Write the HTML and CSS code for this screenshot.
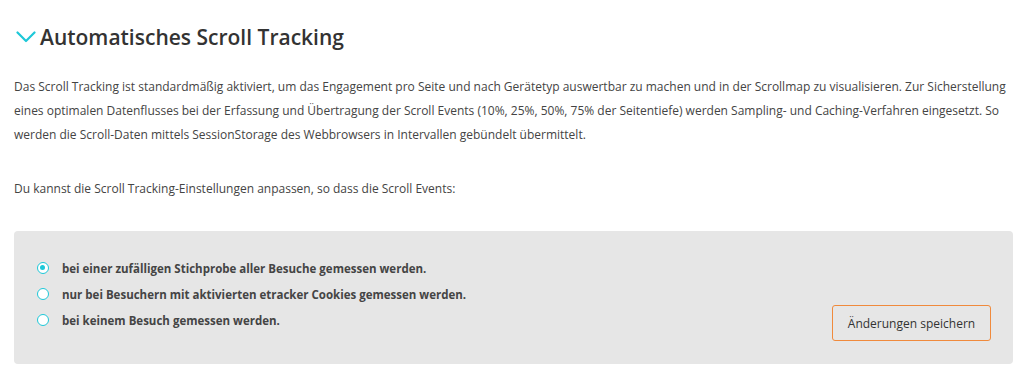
FILE: index.html
```html
<!DOCTYPE html>
<html lang="de">
<head>
<meta charset="utf-8">
<title>Scroll Tracking</title>
<link rel="stylesheet" href="styles.css">
</head>
<body>
<div class="section">
  <h2 class="title">
    <svg class="chevron" width="20" height="12" viewBox="0 0 20 12"><path d="M1.5 1.5 L10 10 L18.5 1.5" fill="none" stroke="#1ec8d8" stroke-width="2.2" stroke-linecap="round" stroke-linejoin="round"/></svg>
    Automatisches Scroll Tracking
  </h2>

  <p class="text">Das Scroll Tracking ist standardmäßig aktiviert, um das Engagement pro Seite und nach Gerätetyp auswertbar zu machen und in der Scrollmap zu visualisieren. Zur Sicherstellung eines optimalen Datenflusses bei der Erfassung und Übertragung der Scroll Events (10%, 25%, 50%, 75% der Seitentiefe) werden Sampling- und Caching-Verfahren eingesetzt. So werden die Scroll-Daten mittels SessionStorage des Webbrowsers in Intervallen gebündelt übermittelt.</p>

  <p class="text">Du kannst die Scroll Tracking-Einstellungen anpassen, so dass die Scroll Events:</p>

  <div class="settings">
    <ul class="options">
      <li class="option checked"><span class="radio"></span>bei einer zufälligen Stichprobe aller Besuche gemessen werden.</li>
      <li class="option"><span class="radio"></span>nur bei Besuchern mit aktivierten etracker Cookies gemessen werden.</li>
      <li class="option"><span class="radio"></span>bei keinem Besuch gemessen werden.</li>
    </ul>
    <button class="save">Änderungen speichern</button>
  </div>
</div>
</body>
</html>
```

FILE: styles.css
```css
*{margin:0; padding:0; box-sizing:border-box;}
body{font-family:"Open Sans", Lato, sans-serif; color:#444; background:#fff;}

.section{padding:22px 11px 0 14px;}

.title{display:flex; align-items:center; gap:4px; font-size:21px; font-weight:600; color:#333; line-height:30px;}
.chevron{margin-left:2px;}

.text{font-size:12px; line-height:24px; margin-top:23px;}
.text + .text{margin-top:30px;}

.settings{margin-top:30px; background:#e6e6e6; border-radius:4px; height:133px; padding:24px 22px 23px 23px; display:flex; justify-content:space-between; align-items:flex-end;}

.options{list-style:none; align-self:flex-start;}
.option{display:flex; align-items:center; font-size:11.5px; font-weight:700; color:#444; height:26px;}
.radio{width:12px; height:12px; border:1.5px solid #1ec8d8; border-radius:50%; margin-right:13px; background:#fff; position:relative;}
.checked .radio::after{content:""; position:absolute; left:2px; top:2px; width:5px; height:5px; border-radius:50%; background:#1ec8d8;}

.save{width:159px; height:36px; border:1px solid #f08a3c; border-radius:3px; background:transparent; font-family:inherit; font-size:12px; color:#333;}
```
